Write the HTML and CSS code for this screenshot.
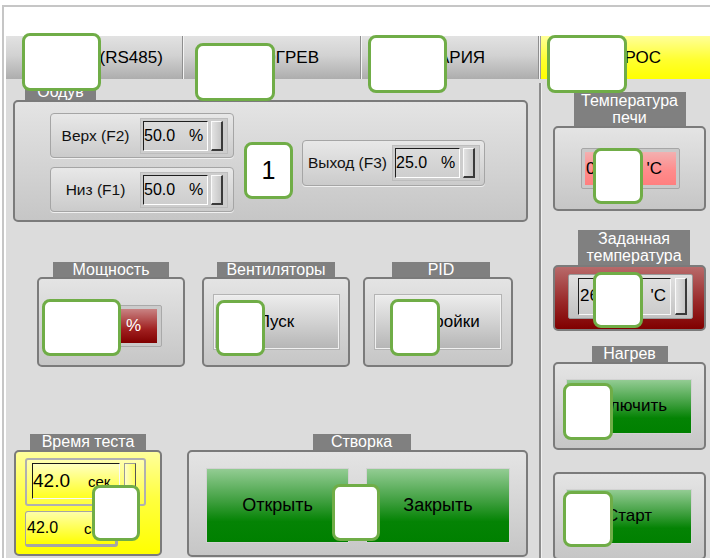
FILE: index.html
```html
<!DOCTYPE html>
<html lang="ru">
<head>
<meta charset="utf-8">
<title>Панель управления печью</title>
<link rel="stylesheet" href="styles.css">
</head>
<body>
<div class="screen">
  <div class="frame">
    <nav class="tabs">
      <div class="tab tab-first">СВЯЗЬ (RS485)</div>
      <div class="tab">ПОДОГРЕВ</div>
      <div class="tab">АВАРИЯ</div>
      <div class="tab tab-active">СБРОС</div>
    </nav>

    <div class="body">
      <div class="main">
        <section class="group g-blow">
          <div class="group-label">Обдув</div>
          <div class="group-box blow-box">
            <div class="blow-col">
              <div class="param">
                <span class="param-label">Верх (F2)</span>
                <div class="spin">
                  <div class="spin-field"><span class="val">50.0</span><span class="unit">%</span></div>
                  <div class="spin-thumb"></div>
                </div>
              </div>
              <div class="param">
                <span class="param-label">Низ (F1)</span>
                <div class="spin">
                  <div class="spin-field"><span class="val">50.0</span><span class="unit">%</span></div>
                  <div class="spin-thumb"></div>
                </div>
              </div>
            </div>
            <div class="param param-out">
              <span class="param-label">Выход (F3)</span>
              <div class="spin">
                <div class="spin-field"><span class="val">25.0</span><span class="unit">%</span></div>
                <div class="spin-thumb"></div>
              </div>
            </div>
          </div>
        </section>

        <div class="row row-mid">
          <section class="group g-power">
            <div class="group-label">Мощность</div>
            <div class="group-box box-center">
              <div class="pct-rim"><div class="pct-field"><span>0.0</span><span>%</span></div></div>
            </div>
          </section>
          <section class="group g-fans">
            <div class="group-label">Вентиляторы</div>
            <div class="group-box box-center">
              <div class="btn-gray">Пуск</div>
            </div>
          </section>
          <section class="group g-pid">
            <div class="group-label">PID</div>
            <div class="group-box box-center">
              <div class="btn-gray">Настройки</div>
            </div>
          </section>
        </div>

        <div class="row row-bottom">
          <section class="group g-time">
            <div class="group-label">Время теста</div>
            <div class="group-box time-box">
              <div class="yspin">
                <div class="yspin-field"><span class="yval">42.0</span><span class="yunit">сек</span></div>
                <div class="yspin-thumb"></div>
              </div>
              <div class="yshow"><span class="yval2">42.0</span><span class="yunit2">сек</span></div>
            </div>
          </section>
          <section class="group g-shutter">
            <div class="group-label">Створка</div>
            <div class="group-box shutter-box">
              <div class="btn-green btn-big">Открыть</div>
              <div class="btn-green btn-big">Закрыть</div>
            </div>
          </section>
        </div>
      </div>

      <div class="divider"></div>

      <aside class="side">
        <section class="group g-side">
          <div class="group-label label-2">Температура<br>печи</div>
          <div class="group-box box-center temp-box">
            <div class="temp-rim"><div class="temp-field"><span>0.0</span><span>'C</span></div></div>
          </div>
        </section>
        <section class="group g-side g-set">
          <div class="group-label label-2">Заданная<br>температура</div>
          <div class="group-box box-center set-box">
            <div class="set-rim">
              <div class="set-field"><span>26.0</span><span>'C</span></div>
              <div class="spin-thumb"></div>
            </div>
          </div>
        </section>
        <section class="group g-side g-heat">
          <div class="group-label">Нагрев</div>
          <div class="group-box box-center heat-box">
            <div class="btn-green btn-side">Включить</div>
          </div>
        </section>
        <section class="group g-side g-start">
          <div class="group-box box-center heat-box">
            <div class="btn-green btn-side">Старт</div>
          </div>
        </section>
      </aside>
    </div>
  </div>

  <div class="mk mk-t1"></div>
  <div class="mk mk-t2"></div>
  <div class="mk mk-t3"></div>
  <div class="mk mk-t4"></div>
  <div class="mk mk-one">1</div>
  <div class="mk mk-temp"></div>
  <div class="mk mk-set"></div>
  <div class="mk mk-power"></div>
  <div class="mk mk-fans"></div>
  <div class="mk mk-pid"></div>
  <div class="mk mk-heat"></div>
  <div class="mk mk-start"></div>
  <div class="mk mk-time"></div>
  <div class="mk mk-shutter"></div>
</div>
</body>
</html>
```

FILE: styles.css
```css
* { box-sizing: border-box; }

html, body {
  margin: 0;
  padding: 0;
  background: #fff;
}

body {
  font-family: "Liberation Sans", Arial, sans-serif;
  color: #000;
}

.screen {
  position: relative;
  width: 710px;
  height: 558px;
  overflow: hidden;
  padding: 5px 0 0 2px;
}

.frame {
  height: 553px;
  border-top: 2px solid #c6c6c6;
  border-left: 2px solid #c6c6c6;
  padding: 29px 0 0 2px;
}

/* ---------- tab strip ---------- */
.tabs {
  display: flex;
  height: 43px;
}

.tab {
  width: 178px;
  display: flex;
  align-items: center;
  justify-content: center;
  font-size: 17px;
  background: linear-gradient(#e2e2e2, #d2d2d2 45%, #adadad);
  border-right: 1px solid #f4f4f4;
  box-shadow: inset -1px 0 0 #8e8e8e;
}

.tab-first { padding-left: 12px; }

.tab-active {
  flex: 1;
  padding-left: 12px;
  border-right: none;
  box-shadow: inset 1px 0 0 #9a9a9a;
  background: linear-gradient(#ffff9a, #ffff30 55%, #ffff00);
}

/* ---------- body ---------- */
.body {
  display: flex;
  height: 479px;
  background: #dcdcdc;
}

.main {
  width: 533px;
  padding-top: 4px;
}

.divider {
  width: 2px;
  margin-top: 4px;
  background: #8c8c8c;
  box-shadow: 1px 0 0 #efefef;
}

.side {
  flex: 1;
  padding: 13px 0 0 12px;
}

/* ---------- group frames ---------- */
.group {
  display: flex;
  flex-direction: column;
  align-items: center;
}

.group-label {
  background: #808080;
  color: #fff;
  font-size: 16px;
  line-height: 16px;
  height: 16px;
  text-align: center;
  white-space: nowrap;
}

.group-box {
  align-self: stretch;
  border: 2px solid #7b7b7b;
  border-radius: 5px;
  background: linear-gradient(#e4e4e4, #c6c6c6);
}

.box-center {
  display: flex;
  align-items: center;
  justify-content: center;
}

/* ---------- blowing ---------- */
.g-blow {
  width: 515px;
  margin-left: 7px;
  align-items: flex-start;
}

.g-blow .group-label {
  width: 71px;
  height: 17px;
  line-height: 17px;
  margin-left: 12px;
}

.blow-box {
  height: 122px;
  display: flex;
  align-items: center;
  padding: 3px 0 0 35px;
}

.blow-col {
  display: flex;
  flex-direction: column;
  gap: 9px;
  margin-right: 68px;
}

.param {
  display: flex;
  align-items: center;
  width: 184px;
  height: 45px;
  border: 1px solid #a5a5a5;
  border-radius: 4px;
  background: linear-gradient(#e8e8e8, #cbcbcb);
  box-shadow: 0 1px 0 #f0f0f0;
}

.param-out {
  width: 183px;
  height: 46px;
}

.param-label {
  width: 89px;
  text-align: center;
  font-size: 15.5px;
  color: #111;
}

.spin {
  display: flex;
  width: 88px;
  height: 36px;
  padding: 2px 4px 2px 2px;
  gap: 3px;
  background: #cdcdcd;
  border: 1px solid #bdbdbd;
}

.spin-field {
  flex: 1;
  display: flex;
  align-items: center;
  font-size: 16px;
  border-style: solid;
  border-width: 1px;
  border-color: #1e1e1e #fff #fff #1e1e1e;
  background: linear-gradient(#dcdcdc, #cecece);
}

.spin-field .val { width: 45px; }

.spin-thumb {
  width: 12px;
  border-style: solid;
  border-width: 1px 2px 2px 1px;
  border-color: #fafafa #3a3a3a #3a3a3a #fafafa;
  background: linear-gradient(90deg, #e2e2e2, #c6c6c6);
}

/* ---------- middle row ---------- */
.row {
  display: flex;
  align-items: flex-start;
}

.row-mid {
  margin-top: 40px;
  padding-left: 31px;
}

.row-mid .group-label {
  height: 15px;
  line-height: 15px;
}

.row-mid .group-box { height: 90px; }

.g-power { width: 148px; }
.g-power .group-label { width: 116px; }
.g-fans { width: 148px; margin-left: 17px; }
.g-fans .group-label { width: 118px; }
.g-pid { width: 150px; margin-left: 13px; }
.g-pid .group-label { width: 98px; margin-left: 6px; }

.g-power .group-box {
  justify-content: flex-start;
  padding: 8px 0 0 9px;
}

.pct-rim {
  width: 114px;
  height: 42px;
  padding: 3px 4px 3px 3px;
  background: #cbcbcb;
  border: 1px solid #a9a9a9;
  border-radius: 2px;
}

.pct-field {
  height: 100%;
  display: flex;
  align-items: center;
  justify-content: space-between;
  padding: 0 16px 0 8px;
  color: #fff;
  font-size: 17px;
  background: linear-gradient(#c98383, #a02020 60%, #800000);
}

.btn-gray {
  width: 125px;
  height: 54px;
  display: flex;
  align-items: center;
  justify-content: center;
  font-size: 17px;
  border: 1px solid #f0f0f0;
  outline: 1px solid #b4b4b4;
  background: linear-gradient(#ececec, #d2d2d2 50%, #b6b6b6);
}

.g-pid .btn-gray { width: 126px; }

/* ---------- bottom row ---------- */
.row-bottom {
  margin-top: 67px;
  padding-left: 8px;
}

.row-bottom .group-label {
  height: 16px;
  line-height: 16px;
}

.g-time { width: 148px; }
.g-time .group-label { width: 116px; }

.time-box {
  height: 106px;
  padding: 6px 0 0 9px;
  display: flex;
  flex-direction: column;
  gap: 5px;
  background: linear-gradient(#ffff9c, #ffff40 45%, #ffff00);
}

.yspin {
  display: flex;
  width: 121px;
  height: 48px;
  padding: 3px 8px 5px 5px;
  gap: 4px;
  border: 2px solid #b0b0b0;
  border-radius: 3px;
  background: linear-gradient(#ffffb0, #ffff40);
}

.yspin-field {
  flex: 1;
  display: flex;
  align-items: center;
  border-style: solid;
  border-width: 1px;
  border-color: #1a1a1a #f8f8f8 #f8f8f8 #1a1a1a;
  background: linear-gradient(#ffffc0, #ffff20);
}

.yval { font-size: 19px; width: 55px; }
.yunit { font-size: 15px; }

.yspin-thumb {
  width: 12px;
  border: 1px solid #9a9a9a;
  border-right-color: #555;
  border-bottom-color: #555;
  background: linear-gradient(90deg, #ffffc8, #ffff60);
}

.yshow {
  display: flex;
  align-items: center;
  width: 93px;
  height: 36px;
  padding-left: 1px;
  border: 1px solid #a5a5a5;
  border-right: 3px solid #a5a5a5;
  border-bottom: 3px solid #a5a5a5;
  border-radius: 3px;
  background: linear-gradient(#ffffa8, #ffff00);
}

.yval2 { font-size: 16px; width: 57px; }
.yunit2 { font-size: 15px; }

.g-shutter { width: 341px; margin-left: 25px; }
.g-shutter .group-label { width: 98px; margin-left: 8px; }

.shutter-box {
  height: 107px;
  display: flex;
  gap: 17px;
  padding: 16px 0 0 17px;
}

.btn-green {
  display: flex;
  align-items: center;
  justify-content: center;
  border: 1px solid #d2d2d2;
  background: linear-gradient(#93cc93, #3d9e3d 45%, #048304 72%, #008000);
}

.btn-big {
  width: 143px;
  height: 75px;
  font-size: 18px;
}

.btn-big + .btn-big { width: 144px; }

/* ---------- right column ---------- */
.g-side { width: 153px; }

.label-2 {
  width: 112px;
  height: 34px;
  line-height: 17px;
}

.temp-box {
  height: 85px;
  padding-left: 2px;
}

.temp-rim {
  width: 99px;
  height: 41px;
  padding: 3px;
  background: #c9c9c9;
  border: 1px solid #a6a6a6;
  border-radius: 2px;
}

.temp-field {
  height: 100%;
  display: flex;
  align-items: center;
  justify-content: space-between;
  padding: 0 14px 0 1px;
  font-size: 17px;
  background: linear-gradient(#f3b0b0, #ff8c8c 55%, #ff7f7f);
}

.g-set { margin-top: 19px; }
.g-set .label-2 { height: 35px; margin-left: 9px; }

.set-box {
  height: 66px;
  padding: 0 0 4px 2px;
  background: linear-gradient(#b86a6a, #9a2a2a 55%, #800000);
}

.set-rim {
  display: flex;
  width: 125px;
  height: 45px;
  gap: 4px;
  padding: 3px 5px 3px 9px;
  background: linear-gradient(#e0e0e0, #c2c2c2);
  border: 1px solid #9a9a9a;
  border-radius: 2px;
}

.set-field {
  flex: 1;
  display: flex;
  align-items: center;
  justify-content: space-between;
  padding: 0 4px 0 1px;
  font-size: 17px;
  border-style: solid;
  border-width: 1px;
  border-color: #1e1e1e #f6f6f6 #f6f6f6 #1e1e1e;
  background: linear-gradient(#dedede, #cccccc);
}

.g-heat { margin-top: 15px; }
.g-heat .group-label { width: 76px; }

.heat-box {
  height: 88px;
  padding-right: 1px;
}

.g-start { margin-top: 22px; }

.btn-side {
  width: 126px;
  height: 55px;
  font-size: 17px;
}

/* ---------- numbered callout markers ---------- */
.mk {
  position: absolute;
  width: 50px;
  height: 57px;
  background: #fff;
  border: 3px solid #70ad47;
  border-radius: 8px;
  display: flex;
  align-items: center;
  justify-content: center;
  font-size: 25px;
  color: #000;
}

.mk-t1 { left: 22px; top: 33px; width: 79px; height: 58px; }
.mk-t2 { left: 195px; top: 43px; width: 80px; height: 58px; }
.mk-t3 { left: 368px; top: 35px; width: 79px; height: 58px; }
.mk-t4 { left: 547px; top: 35px; width: 80px; height: 58px; }
.mk-one { left: 244px; top: 142px; width: 49px; }
.mk-temp { left: 593px; top: 148px; height: 56px; }
.mk-set { left: 593px; top: 272px; height: 56px; }
.mk-power { left: 42px; top: 299px; width: 79px; }
.mk-fans { left: 216px; top: 300px; width: 49px; height: 56px; }
.mk-pid { left: 390px; top: 299px; }
.mk-heat { left: 563px; top: 383px; }
.mk-start { left: 563px; top: 491px; height: 56px; }
.mk-time { left: 92px; top: 485px; width: 48px; height: 56px; }
.mk-shutter { left: 332px; top: 484px; width: 48px; }
```
